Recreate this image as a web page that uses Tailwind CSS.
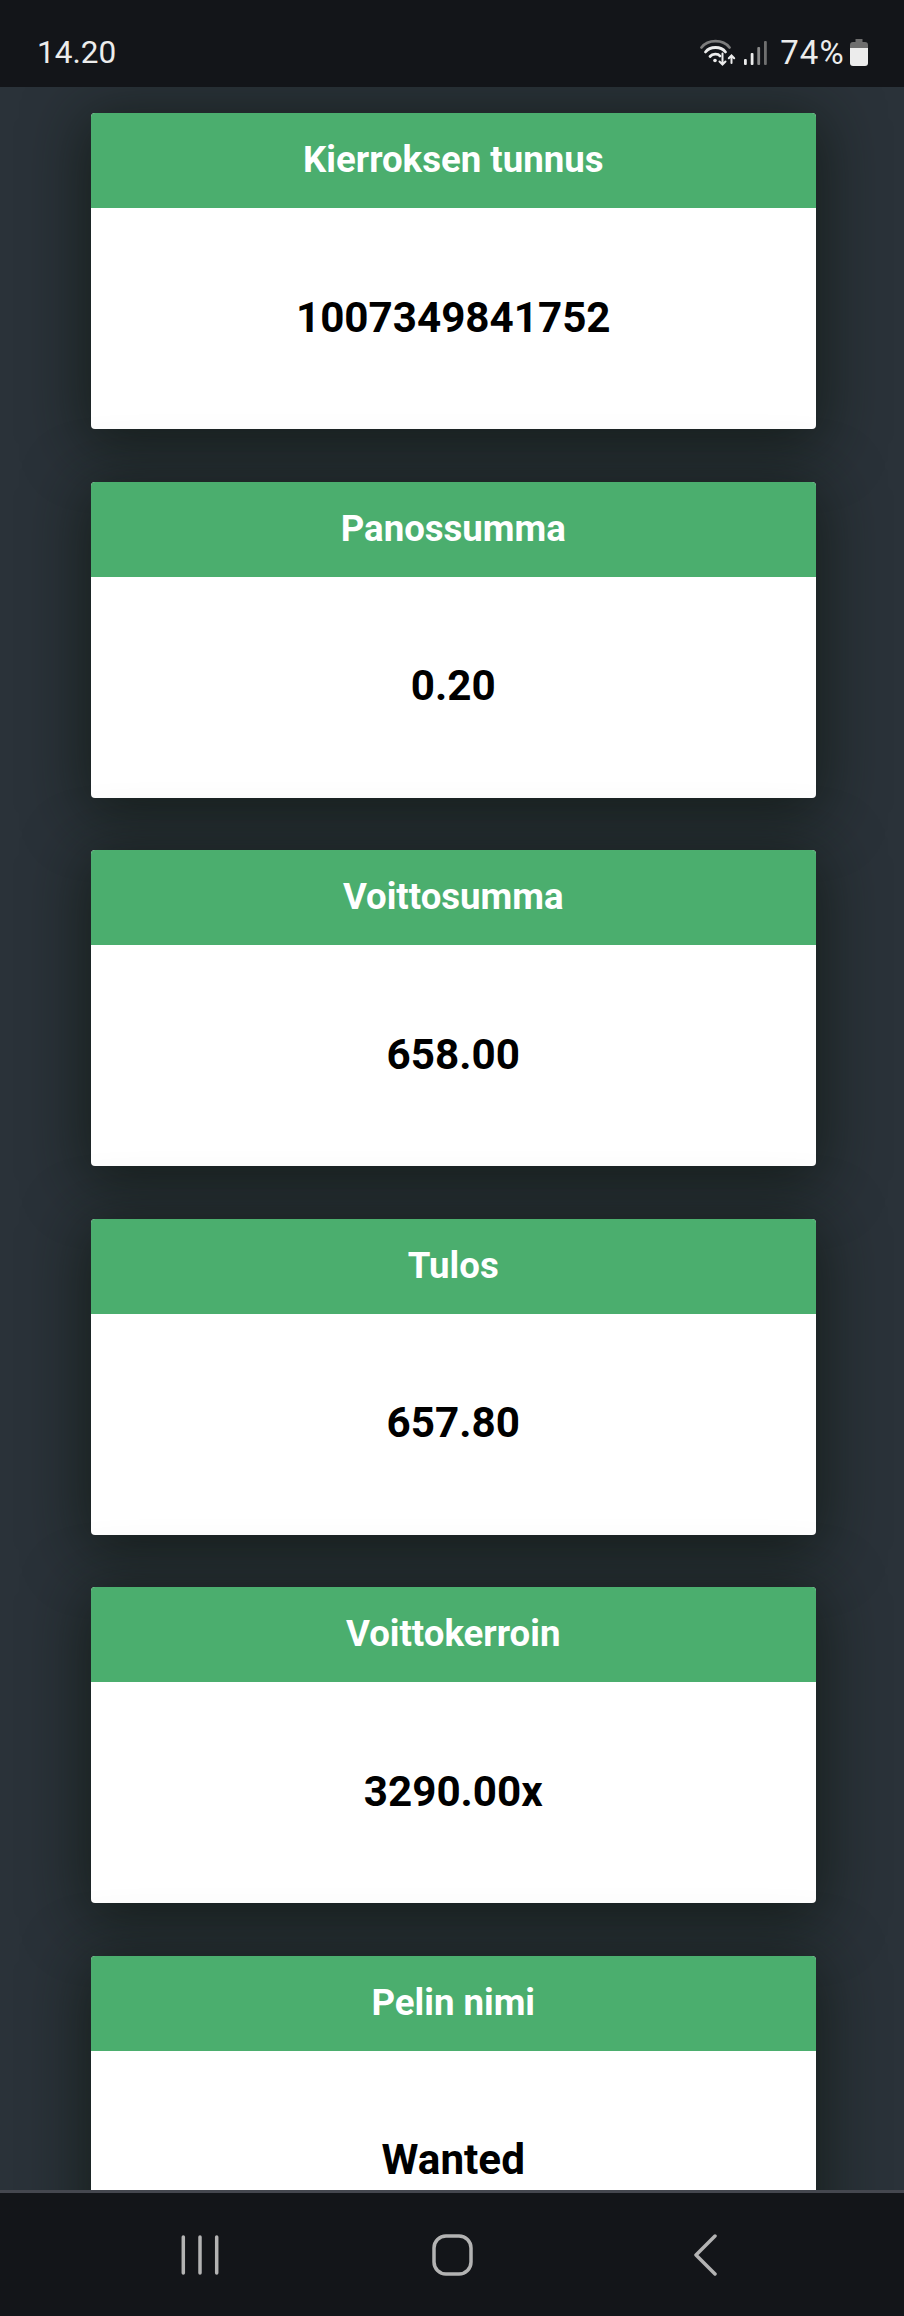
<!DOCTYPE html>
<html lang="en">
<head>
  <meta charset="UTF-8" />
  <title>Kierroksen tiedot</title>
  <script src="https://cdn.jsdelivr.net/npm/@tailwindcss/browser@4"></script>
</head>
<body class="h-[2316px] w-[904px] overflow-hidden bg-[#2a3239] font-['Roboto',sans-serif]">

<div class="flex h-full flex-col">
  <!-- status bar -->
  <header class="relative z-10 flex h-[87px] shrink-0 items-center justify-between bg-[#131519] pl-[37px] pr-[36px] pt-[18px] text-[#ececec]">
    <span class="text-[31.500px] leading-none">14.20</span>
    <div class="flex items-center">
      <svg width="36" height="27" viewBox="0 0 36 27" fill="none" stroke-linecap="round">
        <path d="M1.500 8.500 C8 0 23 0 29.500 8.500" stroke="#7c7c7c" stroke-width="2.800"/>
        <path d="M5.500 13 C10 7 21 7 25.500 13" stroke="#ececec" stroke-width="2.800"/>
        <path d="M10 17.500 C12.500 14.500 18 14.500 20 17" stroke="#ececec" stroke-width="2.800"/>
        <circle cx="15" cy="21.500" r="1.800" fill="#ececec"/>
        <path d="M22.500 14.500 V25.500 M19.500 22.500 L22.500 25.500 L25.500 22.500" stroke="#ececec" stroke-width="2"/>
        <path d="M31.500 24 V16.500 M28.800 19.200 L31.500 16.500 L34.200 19.200" stroke="#ececec" stroke-width="2"/>
      </svg>
      <svg class="ml-[8px]" width="23" height="24" viewBox="0 0 23 24">
        <rect x="0" y="18" width="2.800" height="6" rx="1" fill="#ececec"/>
        <rect x="6.700" y="12" width="2.800" height="12" rx="1" fill="#ececec"/>
        <rect x="13.300" y="6" width="2.800" height="18" rx="1" fill="#8a8a8a"/>
        <rect x="20" y="0" width="2.800" height="24" rx="1" fill="#6f6f6f"/>
      </svg>
      <span class="ml-[13px] text-[33px] leading-none tracking-[1.200px]">74%</span>
      <svg class="ml-[5px]" width="18" height="27" viewBox="0 0 18 27">
        <path d="M5.500 0 H12.500 V3 H15 Q18 3 18 6 V9 H0 V6 Q0 3 3 3 H5.500 Z" fill="#6e6e6e"/>
        <path d="M0 9 H18 V24 Q18 27 15 27 H3 Q0 27 0 24 Z" fill="#ececec"/>
      </svg>
    </div>
  </header>

  <!-- cards -->
  <main class="min-h-0 flex-1 overflow-hidden pl-[91px] pr-[88px] pt-[26px]">
    <div class="flex w-[724.500px] flex-col gap-[52.500px]">

      <section class="flex h-[316px] shrink-0 flex-col overflow-hidden rounded-[4px] bg-white shadow-[0_10px_60px_6px_rgba(12,20,14,0.68)]">
        <h2 class="flex h-[95px] shrink-0 items-center justify-center bg-[#4bae6e] text-[36.600px] font-bold text-white">Kierroksen tunnus</h2>
        <p class="flex flex-1 items-center justify-center pb-[2px] text-[42.200px] font-bold text-black">1007349841752</p>
      </section>

      <section class="flex h-[316px] shrink-0 flex-col overflow-hidden rounded-[4px] bg-white shadow-[0_10px_60px_6px_rgba(12,20,14,0.68)]">
        <h2 class="flex h-[95px] shrink-0 items-center justify-center bg-[#4bae6e] text-[36.600px] font-bold text-white">Panossumma</h2>
        <p class="flex flex-1 items-center justify-center pb-[2px] text-[42.200px] font-bold text-black">0.20</p>
      </section>

      <section class="flex h-[316px] shrink-0 flex-col overflow-hidden rounded-[4px] bg-white shadow-[0_10px_60px_6px_rgba(12,20,14,0.68)]">
        <h2 class="flex h-[95px] shrink-0 items-center justify-center bg-[#4bae6e] text-[36.600px] font-bold text-white">Voittosumma</h2>
        <p class="flex flex-1 items-center justify-center pb-[2px] text-[42.200px] font-bold text-black">658.00</p>
      </section>

      <section class="flex h-[316px] shrink-0 flex-col overflow-hidden rounded-[4px] bg-white shadow-[0_10px_60px_6px_rgba(12,20,14,0.68)]">
        <h2 class="flex h-[95px] shrink-0 items-center justify-center bg-[#4bae6e] text-[36.600px] font-bold text-white">Tulos</h2>
        <p class="flex flex-1 items-center justify-center pb-[2px] text-[42.200px] font-bold text-black">657.80</p>
      </section>

      <section class="flex h-[316px] shrink-0 flex-col overflow-hidden rounded-[4px] bg-white shadow-[0_10px_60px_6px_rgba(12,20,14,0.68)]">
        <h2 class="flex h-[95px] shrink-0 items-center justify-center bg-[#4bae6e] text-[36.600px] font-bold text-white">Voittokerroin</h2>
        <p class="flex flex-1 items-center justify-center pb-[2px] text-[42.200px] font-bold text-black">3290.00x</p>
      </section>

      <section class="flex h-[316px] shrink-0 flex-col overflow-hidden rounded-[4px] bg-white shadow-[0_10px_60px_6px_rgba(12,20,14,0.68)]">
        <h2 class="flex h-[95px] shrink-0 items-center justify-center bg-[#4bae6e] text-[36.600px] font-bold text-white">Pelin nimi</h2>
        <p class="flex flex-1 items-center justify-center pb-[2px] text-[42.200px] font-bold text-black">Wanted</p>
      </section>

    </div>
  </main>

  <!-- nav bar -->
  <nav class="relative z-10 grid h-[126px] shrink-0 grid-cols-3 border-t-[3px] border-[#45474f] bg-[#131519] pl-[74px] pr-[72px]">
    <div class="flex items-center justify-center">
      <svg width="38" height="40" viewBox="0 0 38 40" fill="none" stroke="#b3b3b3" stroke-width="3.500" stroke-linecap="round"><path d="M2.300 2 V38 M19 2 V38 M35.700 2 V38"/></svg>
    </div>
    <div class="flex items-center justify-center">
      <svg width="41" height="42" viewBox="0 0 41 42" fill="none" stroke="#b3b3b3" stroke-width="3.500"><rect x="2" y="2" width="37" height="38" rx="12"/></svg>
    </div>
    <div class="flex items-center justify-center">
      <svg width="23" height="42" viewBox="0 0 23 42" fill="none" stroke="#b3b3b3" stroke-width="3.500" stroke-linecap="round" stroke-linejoin="round"><path d="M21 2 L2 21 L21 40"/></svg>
    </div>
  </nav>
</div>

</body>
</html>
